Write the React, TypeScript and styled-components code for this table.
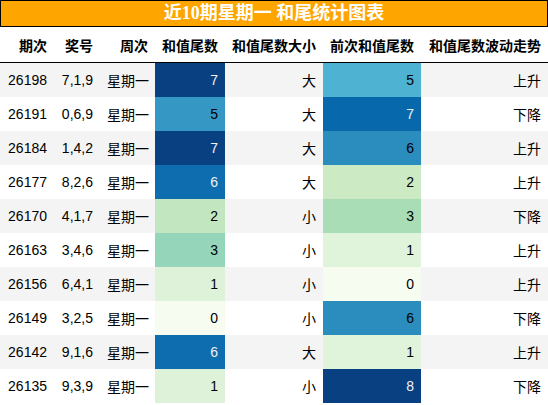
import styled, { createGlobalStyle } from "styled-components";

const GlobalStyle = createGlobalStyle`
  body {
    margin: 0;
    background: #ffffff;
    font-family: "Liberation Sans", "Noto Sans CJK SC", sans-serif;
  }
`;

// GnBu 色阶
const GNBU = ["#f7fcf0", "#e0f3db", "#ccebc5", "#a8ddb5", "#7bccc4", "#4eb3d3", "#2b8cbe", "#0868ac", "#084081"];

function hexToRgb(h: string) {
  const n = parseInt(h.slice(1), 16);
  return [(n >> 16) & 255, (n >> 8) & 255, n & 255];
}

function gnbu(t: number) {
  const x = Math.max(0, Math.min(1, t)) * (GNBU.length - 1);
  const i = Math.min(Math.floor(x), GNBU.length - 2);
  const f = x - i;
  const a = hexToRgb(GNBU[i]);
  const b = hexToRgb(GNBU[i + 1]);
  const c = a.map((v, k) => Math.round(v + (b[k] - v) * f));
  const lum = (0.2126 * c[0] + 0.7152 * c[1] + 0.0722 * c[2]) / 255;
  return { bg: `rgb(${c[0]},${c[1]},${c[2]})`, fg: lum < 0.45 ? "#f1f1f1" : "#000000" };
}

type Row = {
  issue: string;
  nums: string;
  week: string;
  tail: number;
  size: string;
  prev: number;
  trend: string;
};

const rows: Row[] = [
  { issue: "26198", nums: "7,1,9", week: "星期一", tail: 7, size: "大", prev: 5, trend: "上升" },
  { issue: "26191", nums: "0,6,9", week: "星期一", tail: 5, size: "大", prev: 7, trend: "下降" },
  { issue: "26184", nums: "1,4,2", week: "星期一", tail: 7, size: "大", prev: 6, trend: "上升" },
  { issue: "26177", nums: "8,2,6", week: "星期一", tail: 6, size: "大", prev: 2, trend: "上升" },
  { issue: "26170", nums: "4,1,7", week: "星期一", tail: 2, size: "小", prev: 3, trend: "下降" },
  { issue: "26163", nums: "3,4,6", week: "星期一", tail: 3, size: "小", prev: 1, trend: "上升" },
  { issue: "26156", nums: "6,4,1", week: "星期一", tail: 1, size: "小", prev: 0, trend: "上升" },
  { issue: "26149", nums: "3,2,5", week: "星期一", tail: 0, size: "小", prev: 6, trend: "下降" },
  { issue: "26142", nums: "9,1,6", week: "星期一", tail: 6, size: "大", prev: 1, trend: "上升" },
  { issue: "26135", nums: "9,3,9", week: "星期一", tail: 1, size: "小", prev: 8, trend: "下降" },
];

const widths = [54, 46, 55, 70, 98, 98, 127];
const headers = ["期次", "奖号", "周次", "和值尾数", "和值尾数大小", "前次和值尾数", "和值尾数波动走势"];

const Wrap = styled.div`
  width: 548px;
`;

const Title = styled.div`
  height: 25px;
  border: 1px solid #000000;
  background: #ffa500;
  color: #ffffff;
  font-family: "Liberation Serif", "Noto Sans CJK SC", serif;
  font-weight: bold;
  font-size: 18px;
  line-height: 25px;
  text-align: center;
`;

const Table = styled.table`
  width: 548px;
  border-collapse: collapse;
  table-layout: fixed;
  font-size: 14px;
  color: #000000;
`;

const Head = styled.th`
  height: 35px;
  padding: 0 7px;
  text-align: right;
  font-weight: bold;
  white-space: nowrap;
  border-bottom: 1px solid #000000;
`;

const BodyRow = styled.tr<{ $odd: boolean }>`
  background: ${(p) => (p.$odd ? "#f4f4f4" : "#ffffff")};
`;

const Cell = styled.td<{ $bg?: string; $fg?: string }>`
  height: 34px;
  padding: 0 7px;
  text-align: right;
  white-space: nowrap;
  background: ${(p) => p.$bg ?? "transparent"};
  color: ${(p) => p.$fg ?? "#000000"};
`;

export default function App() {
  const tailMax = Math.max(...rows.map((r) => r.tail));
  const tailMin = Math.min(...rows.map((r) => r.tail));
  const prevMax = Math.max(...rows.map((r) => r.prev));
  const prevMin = Math.min(...rows.map((r) => r.prev));

  return (
    <Wrap>
      <GlobalStyle />
      <Title>近10期星期一 和尾统计图表</Title>
      <Table>
        <colgroup>
          {widths.map((w, i) => (
            <col key={i} style={{ width: w }} />
          ))}
        </colgroup>
        <thead>
          <tr>
            {headers.map((h) => (
              <Head key={h}>{h}</Head>
            ))}
          </tr>
        </thead>
        <tbody>
          {rows.map((r, i) => {
            const t = gnbu((r.tail - tailMin) / (tailMax - tailMin));
            const p = gnbu((r.prev - prevMin) / (prevMax - prevMin));
            return (
              <BodyRow key={r.issue} $odd={i % 2 === 0}>
                <Cell>{r.issue}</Cell>
                <Cell>{r.nums}</Cell>
                <Cell>{r.week}</Cell>
                <Cell $bg={t.bg} $fg={t.fg}>{r.tail}</Cell>
                <Cell>{r.size}</Cell>
                <Cell $bg={p.bg} $fg={p.fg}>{r.prev}</Cell>
                <Cell>{r.trend}</Cell>
              </BodyRow>
            );
          })}
        </tbody>
      </Table>
    </Wrap>
  );
}
